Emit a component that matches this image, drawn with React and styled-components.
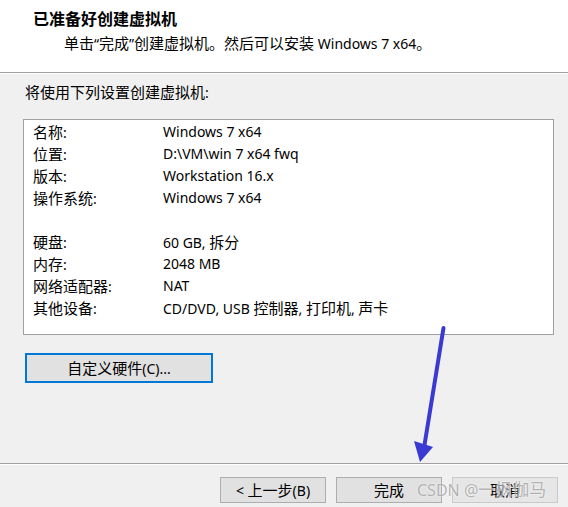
import React from "react";
import styled, { createGlobalStyle } from "styled-components";

const GlobalStyle = createGlobalStyle`
  html, body { margin: 0; padding: 0; background: #f0f0f0; }
  body {
    font-family: "Noto Sans", "Noto Sans CJK SC", sans-serif;
    font-size: 14px;
    color: #000;
  }
`;

/* Han characters in the dialog font run a little larger than the Latin glyphs */
const Han = styled.span`
  font-family: "Noto Sans CJK SC", sans-serif;
  font-size: ${(p) => p.$size || 15}px;
`;

const HAN_RUN = /([\u3000-\u303f\u3400-\u9fff\uff00-\uffef]+)/;

function Txt({ children, size }) {
  return String(children)
    .split(HAN_RUN)
    .map((part, i) =>
      i % 2 ? (
        <Han key={i} $size={size}>
          {part}
        </Han>
      ) : (
        part
      )
    );
}

const Wizard = styled.div`
  position: relative;
  width: 568px;
  height: 507px;
  display: flex;
  flex-direction: column;
  background: #f0f0f0;
  overflow: hidden;
`;

const Header = styled.header`
  height: 72px;
  box-sizing: border-box;
  background: #fff;
  padding: 8px 0 0 33px;
  display: flex;
  flex-direction: column;
  gap: 5px;
`;

const Title = styled.div`
  font-family: "Noto Sans CJK SC", sans-serif;
  font-size: 16px;
  font-weight: 700;
  line-height: 20px;
`;

const Subtitle = styled.div`
  line-height: 20px;
  padding-left: 31px;
  white-space: nowrap;
`;

const Etched = styled.div`
  height: 0;
  border-top: 1px solid #a0a0a0;
  border-bottom: 1px solid #ffffff;
`;

const Body = styled.main`
  flex: 1;
  display: flex;
  flex-direction: column;
  padding-left: 23px;
`;

const Intro = styled.div`
  margin: 8px 0 0 2px;
  line-height: 20px;
`;

const Summary = styled.div`
  margin-top: 16px;
  width: 531px;
  height: 216px;
  box-sizing: border-box;
  background: #fff;
  border: 1px solid #a0a0a0;
  padding: 1px 0 0 9px;
  display: grid;
  grid-template-columns: 130px 1fr;
  grid-auto-rows: 22px;
  align-items: center;
`;

const Cell = styled.div`
  line-height: 22px;
  white-space: nowrap;
`;

const Gap = styled.div`
  grid-column: 1 / -1;
`;

const CustomizeButton = styled.button`
  margin: 18px 0 0 2px;
  width: 188px;
  height: 30px;
  box-sizing: border-box;
  border: 2px solid #0078d7;
  background: #e1e1e1;
  font: inherit;
  color: #000;
  padding: 0;
  line-height: 26px;
`;

const Footer = styled.footer`
  display: flex;
  flex-direction: column;
`;

const ButtonRow = styled.div`
  display: flex;
  justify-content: flex-end;
  gap: 10px;
  padding: 12px 10px 4px 0;
`;

const NavButton = styled.button`
  width: 106px;
  height: 26px;
  box-sizing: border-box;
  border: 1px solid ${(p) => (p.$muted ? "#c9c9c9" : "#adadad")};
  background: ${(p) => (p.$muted ? "#e6e6e6" : "#e1e1e1")};
  font: inherit;
  color: #000;
  padding: 0;
  line-height: 24px;
`;

const Annotation = styled.svg`
  position: absolute;
  left: 0;
  top: 0;
  pointer-events: none;
`;

const Watermark = styled.div`
  position: absolute;
  left: 417px;
  top: 478px;
  font-size: 16px;
  line-height: 22px;
  color: rgba(150, 150, 150, 0.7);
  text-shadow: 0 0 2px rgba(255, 255, 255, 0.9);
  pointer-events: none;
  white-space: nowrap;
`;

const specs = [
  ["名称:", "Windows 7 x64"],
  ["位置:", "D:\\VM\\win 7 x64 fwq"],
  ["版本:", "Workstation 16.x"],
  ["操作系统:", "Windows 7 x64"],
  null,
  ["硬盘:", "60 GB, 拆分"],
  ["内存:", "2048 MB"],
  ["网络适配器:", "NAT"],
  ["其他设备:", "CD/DVD, USB 控制器, 打印机, 声卡"],
];

export default function App() {
  return (
    <>
      <GlobalStyle />
      <Wizard>
        <Header>
          <Title>已准备好创建虚拟机</Title>
          <Subtitle>
            <Txt>单击“完成”创建虚拟机。然后可以安装 Windows 7 x64。</Txt>
          </Subtitle>
        </Header>
        <Etched />
        <Body>
          <Intro>
            <Txt>将使用下列设置创建虚拟机:</Txt>
          </Intro>
          <Summary>
            {specs.map((row, i) =>
              row ? (
                <React.Fragment key={i}>
                  <Cell>
                    <Txt>{row[0]}</Txt>
                  </Cell>
                  <Cell>
                    <Txt>{row[1]}</Txt>
                  </Cell>
                </React.Fragment>
              ) : (
                <Gap key={i} />
              )
            )}
          </Summary>
          <div>
            <CustomizeButton>
              <Txt>自定义硬件(C)...</Txt>
            </CustomizeButton>
          </div>
        </Body>
        <Footer>
          <Etched />
          <ButtonRow>
            <NavButton>
              <Txt>{"< 上一步(B)"}</Txt>
            </NavButton>
            <NavButton>
              <Txt>完成</Txt>
            </NavButton>
            <NavButton $muted>
              <Txt>取消</Txt>
            </NavButton>
          </ButtonRow>
        </Footer>
        <Annotation width="568" height="507" viewBox="0 0 568 507">
          <line x1="443.5" y1="328" x2="424" y2="448" stroke="#3a3ad2" strokeWidth="4" strokeLinecap="round" />
          <polygon points="414,441 433,447 420,462" fill="#3a3ad2" />
        </Annotation>
        <Watermark>
          <Txt size={17}>CSDN @一枫伽马</Txt>
        </Watermark>
      </Wizard>
    </>
  );
}
